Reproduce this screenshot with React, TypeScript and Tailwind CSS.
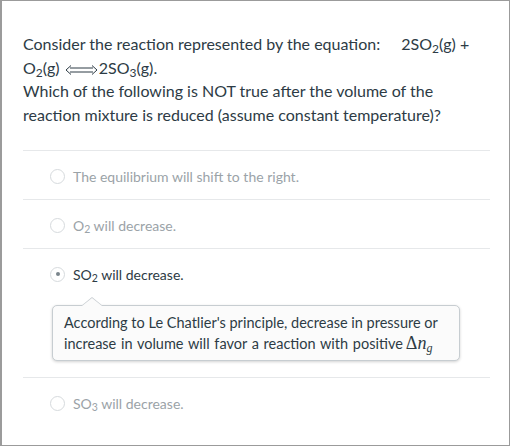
import React from "react";

function Radio({ checked }: { checked?: boolean }) {
  return (
    <span className="relative inline-flex w-[15px] h-[15px] shrink-0 rounded-full border border-[#d6dadd] bg-white items-center justify-center">
      {checked && <span className="w-[4px] h-[4px] rounded-full bg-[#7a858c]" />}
    </span>
  );
}

function Option({ children, checked }: { children: React.ReactNode; checked?: boolean }) {
  return (
    <div className="border-t border-[#e6e8ea] pt-[15px] pb-[13px]">
      <div className="flex items-center pl-[27px] gap-[8px] h-[20px]">
        <Radio checked={checked} />
        <span className={checked ? "text-[14px] text-[#2d3b45]" : "text-[14px] text-[#9ba3a8]"}>{children}</span>
      </div>
    </div>
  );
}

function LongDoubleArrow() {
  return (
    <svg width="33" height="10" viewBox="0 0 33 10" className="inline-block align-[-1px] mx-[1px]" fill="none" stroke="#2d3b45" strokeWidth="1">
      <path d="M5 3 H28 M5 7 H28" />
      <path d="M6 0.5 L1 5 L6 9.5" />
      <path d="M27 0.5 L32 5 L27 9.5" />
    </svg>
  );
}

export default function App() {
  return (
    <div
      className="w-[510px] h-[446px] border border-[#9b9b9b] border-l-2 bg-white text-[#2d3b45] px-[21px] pr-[19px] pt-[31px] overflow-hidden"
      style={{ fontFamily: "Lato, 'Noto Sans', sans-serif" }}
    >
      <div className="text-[16px] leading-[23.5px]">
        <div>
          Consider the reaction represented by the equation:
          <span className="inline-block w-[21px]" />
          2SO<sub>2</sub>(g) +
        </div>
        <div>
          O<sub>2</sub>(g){" "}
          <LongDoubleArrow />
          2SO<sub>3</sub>(g).
        </div>
        <div>Which of the following is NOT true after the volume of the</div>
        <div>reaction mixture is reduced (assume constant temperature)?</div>
      </div>

      <div className="mt-[24px]">
        <Option>The equilibrium will shift to the right.</Option>
        <Option>
          O<sub>2</sub> will decrease.
        </Option>
        <div>
          <Option checked>
            SO<sub>2</sub> will decrease.
          </Option>
          <div className="relative ml-[29px] mr-[30px] mt-[8px] mb-[16px]">
            <div className="relative rounded-[5px] border border-[#c7cdd1] bg-[#fbfbfb] shadow-[0_1px_3px_rgba(0,0,0,0.18)] pl-[11px] pr-[6px] pt-[7px] pb-[6px] text-[14.5px] leading-[20px] text-[#2d3b45]">
              <span
                className="absolute -top-[9px] left-[28px] w-0 h-0 border-l-[11px] border-r-[11px] border-b-[9px] border-l-transparent border-r-transparent border-b-[#c7cdd1]"
              />
              <span
                className="absolute -top-[8px] left-[29px] w-0 h-0 border-l-[10px] border-r-[10px] border-b-[8px] border-l-transparent border-r-transparent border-b-[#fbfbfb]"
              />
              <div className="whitespace-nowrap">According to Le Chatlier's principle, decrease in pressure or</div>
              <div className="whitespace-nowrap">
                <span className="[word-spacing:1px]">increase in volume will favor a reaction with positive</span>
                <span className="text-[18px] ml-[3px]" style={{ fontFamily: "'Liberation Serif', 'DejaVu Serif', serif" }}>
                  Δ<i>n</i>
                  <sub className="italic text-[12px]">g</sub>
                </span>
              </div>
            </div>
          </div>
        </div>
        <Option>
          SO<sub>3</sub> will decrease.
        </Option>
      </div>
    </div>
  );
}
